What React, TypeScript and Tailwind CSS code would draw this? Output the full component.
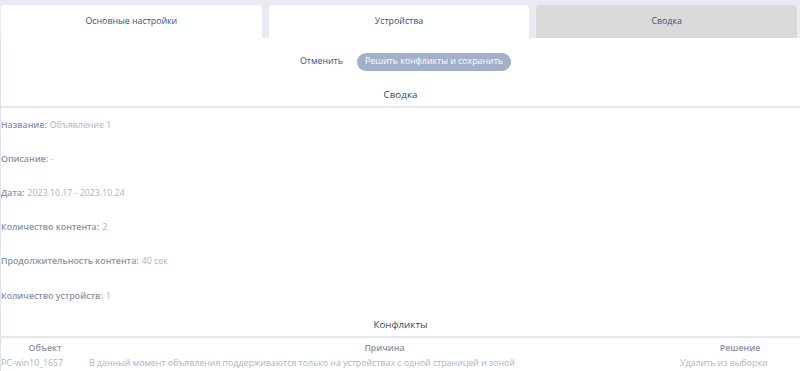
const TABS = [
  { label: 'Основные настройки', active: false },
  { label: 'Устройства', active: false },
  { label: 'Сводка', active: true },
]

const SUMMARY = [
  { label: 'Название:', value: 'Объявление 1' },
  { label: 'Описание:', value: '-' },
  { label: 'Дата:', value: '2023.10.17 - 2023.10.24' },
  { label: 'Количество контента:', value: '2' },
  { label: 'Продолжительность контента:', value: '40 сек' },
  { label: 'Количество устройств:', value: '1' },
]

const CONFLICTS = [
  {
    object: 'PC-win10_1657',
    reason: 'В данный момент объявления поддерживаются только на устройствах с одной страницей и зоной',
    action: 'Удалить из выборки',
  },
]

export default function App() {
  return (
    <div
      className="min-h-[371px] bg-[#e8ebf3] pt-[5px] flex flex-col"
      style={{ fontFamily: '"Open Sans", "Noto Sans", sans-serif' }}
    >
      <div className="flex gap-[7px] pl-px pr-[3px]">
        {TABS.map((t) => (
          <div
            key={t.label}
            className={`flex-1 h-[33px] rounded-t-[4px] flex items-center justify-center text-[8.8px] text-[#32518a] ${
              t.active ? 'bg-[#dadada]' : 'bg-white'
            }`}
          >
            {t.label}
          </div>
        ))}
      </div>

      <div className="flex-1 bg-white border-l border-[#dfe2ef] flex flex-col">
        <div className="h-[46px] flex items-center justify-center gap-[14px] pt-[2px] pl-[10px]">
          <span className="text-[8.8px] text-[#32518a]">Отменить</span>
          <span className="h-[18px] px-[8px] rounded-full bg-[#a3b0c9] text-white text-[8.8px] flex items-center">
            Решить конфликты и сохранить
          </span>
        </div>

        <div className="h-[22px] flex items-center justify-center text-[9.8px] text-[#34476b] border-b-2 border-[#e4e6f0] box-content">
          Сводка
        </div>

        <div className="flex flex-col mt-[1px]">
          {SUMMARY.map((s, i) => (
            <div
              key={s.label}
              className={`flex items-center text-[8.8px] ${i === 5 ? 'h-[35px] pt-px' : 'h-[34px]'}`}
            >
              <span className="font-semibold text-[#8a93a6]">{s.label}</span>
              <span className="ml-[3px] text-[#a9b4c8]">{s.value}</span>
            </div>
          ))}
        </div>

        <div className="h-[22px] flex items-center justify-center text-[9.8px] text-[#34476b] border-b-2 border-[#e4e6f0] box-content">
          Конфликты
        </div>

        <div className="grid grid-cols-[88px_1fr_120px] text-[8.8px] pt-[3px]">
          <div className="h-[15px] leading-[15px] text-center font-semibold text-[#8a93a6]">Объект</div>
          <div className="h-[15px] leading-[15px] text-center font-semibold text-[#8a93a6]">Причина</div>
          <div className="h-[15px] leading-[15px] text-center font-semibold text-[#8a93a6]">Решение</div>
          {CONFLICTS.map((c) => (
            <>
              <div key={c.object + 'o'} className="h-[15px] leading-[15px] text-[#a9b4c8] whitespace-nowrap">{c.object}</div>
              <div key={c.object + 'r'} className="h-[15px] leading-[15px] text-[#a9b4c8] whitespace-nowrap">{c.reason}</div>
              <div key={c.object + 'a'} className="h-[15px] leading-[15px] text-[#a9b4c8] whitespace-nowrap">{c.action}</div>
            </>
          ))}
        </div>
      </div>
    </div>
  )
}
